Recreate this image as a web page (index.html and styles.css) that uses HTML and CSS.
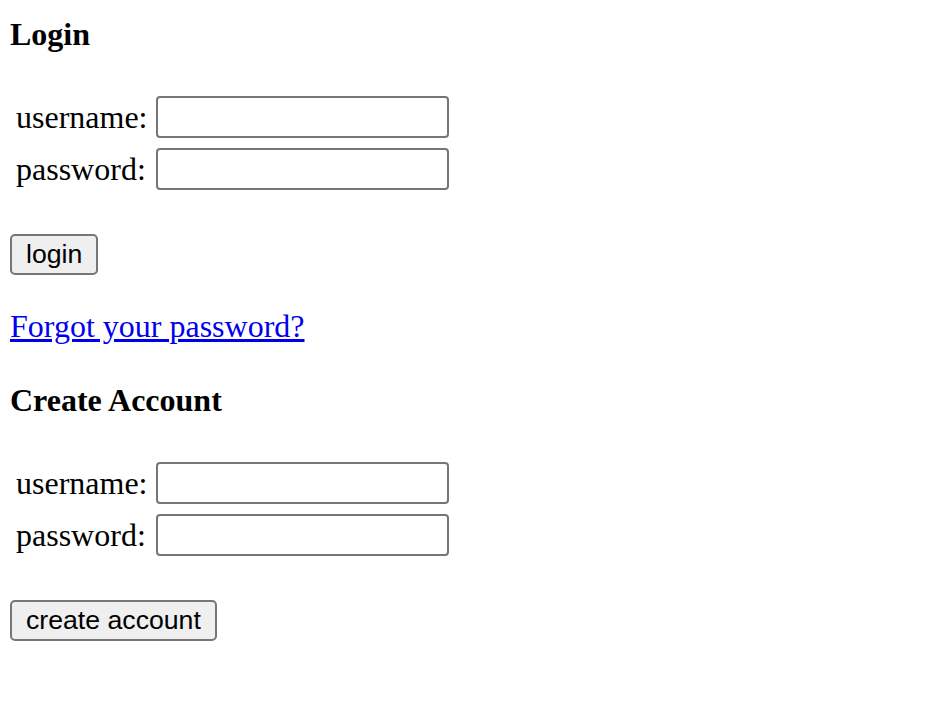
FILE: index.html
```html
<!DOCTYPE html>
<html lang="en">
<head>
    <meta charset="UTF-8">
    <title>Login</title>
    <link rel="stylesheet" href="styles.css">
</head>
<body>
    <h4 class="title">Login</h4>
    <form class="form">
        <div class="fields">
            <label for="login-user">username:</label>
            <input type="text" id="login-user">
            <label for="login-pass">password:</label>
            <input type="password" id="login-pass">
        </div>
        <button type="button" class="btn">login</button>
    </form>

    <p class="forgot"><a href="#">Forgot your password?</a></p>

    <h4 class="title title-create">Create Account</h4>
    <form class="form">
        <div class="fields">
            <label for="new-user">username:</label>
            <input type="text" id="new-user">
            <label for="new-pass">password:</label>
            <input type="password" id="new-pass">
        </div>
        <button type="button" class="btn">create account</button>
    </form>
</body>
</html>
```

FILE: styles.css
```css
* {
    margin: 0;
    padding: 0;
}
body {
    padding: 16px 10px;
    font-family: "Liberation Serif", "Times New Roman", serif;
    font-size: 32px;
    color: #000;
    background-color: #fff;
}
.title {
    font-size: 32px;
    font-weight: bold;
}
.title-create {
    margin-top: 37px;
}
.fields {
    display: grid;
    grid-template-columns: auto auto;
    justify-content: start;
    align-items: center;
    column-gap: 8px;
    row-gap: 10px;
    margin-top: 43px;
    padding-left: 6px;
}
.fields input {
    width: 293px;
    height: 42px;
    box-sizing: border-box;
    border: 2px solid #767676;
    border-radius: 4px;
    padding: 2px 4px;
    font-family: "Liberation Sans", Arial, sans-serif;
    font-size: 26.67px;
    background-color: #fff;
}
.btn {
    display: block;
    height: 41px;
    margin-top: 44px;
    padding: 0 14px;
    border: 2px solid #767676;
    border-radius: 5px;
    background-color: #efefef;
    color: #000;
    font-family: "Liberation Sans", Arial, sans-serif;
    font-size: 26.67px;
    cursor: pointer;
}
.forgot {
    margin-top: 33px;
}
.forgot a {
    color: #0000ee;
    text-decoration: underline;
}
```
